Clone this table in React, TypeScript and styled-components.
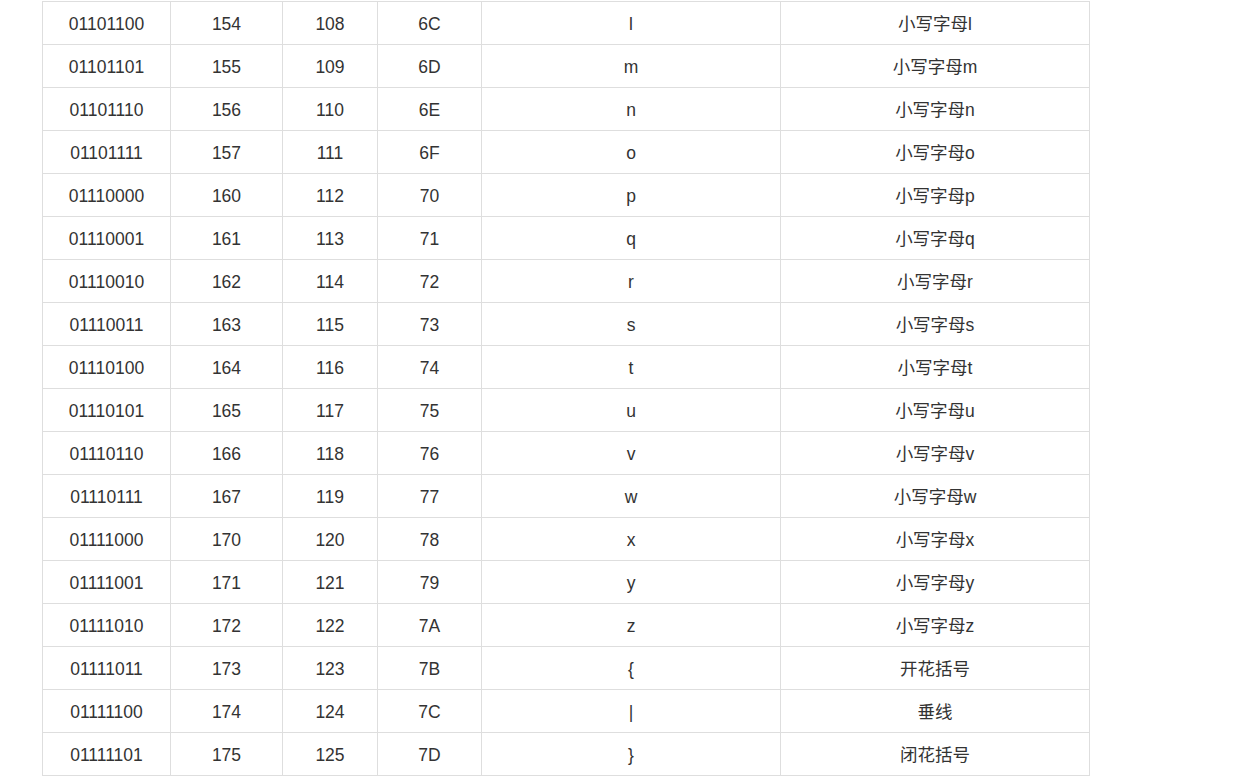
import React from "react";
import styled, { createGlobalStyle } from "styled-components";

const GlobalStyle = createGlobalStyle`
  html, body {
    margin: 0;
    padding: 0;
    background: #ffffff;
  }
  body {
    font-family: "Liberation Sans", Arial, "Noto Sans CJK SC", sans-serif;
    color: #333333;
  }
`;

const Page = styled.div`
  padding: 1px 0 0 42px;
  width: 1251px;
  height: 777px;
  box-sizing: border-box;
  overflow: hidden;
`;

const Table = styled.table`
  border-collapse: collapse;
  table-layout: fixed;
  width: 1047px;
`;

const Col = styled.col<{ $w: number }>`
  width: ${(p) => p.$w}px;
`;

const Row = styled.tr`
  height: 43px;
`;

const Cell = styled.td`
  border: 1px solid #dedede;
  padding: 1px 0 0 0;
  text-align: center;
  vertical-align: middle;
  font-size: 17.5px;
  line-height: 20px;
  color: #333333;
  font-family: "Liberation Sans", Arial, "Noto Sans CJK SC", sans-serif;
`;

const names: Record<number, string> = {
  123: "开花括号",
  124: "垂线",
  125: "闭花括号",
};

const rows = Array.from({ length: 18 }, (_, i) => {
  const code = 108 + i;
  const ch = String.fromCharCode(code);
  return {
    bin: code.toString(2).padStart(8, "0"),
    oct: code.toString(8),
    dec: String(code),
    hex: code.toString(16).toUpperCase(),
    ch,
    desc: names[code] ?? `小写字母${ch}`,
  };
});

const widths = [128, 112, 95, 104, 299, 309];

export default function App() {
  return (
    <>
      <GlobalStyle />
      <Page>
        <Table>
          <colgroup>
            {widths.map((w, i) => (
              <Col key={i} $w={w} />
            ))}
          </colgroup>
          <tbody>
            {rows.map((r) => (
              <Row key={r.dec}>
                <Cell>{r.bin}</Cell>
                <Cell>{r.oct}</Cell>
                <Cell>{r.dec}</Cell>
                <Cell>{r.hex}</Cell>
                <Cell>{r.ch}</Cell>
                <Cell>{r.desc}</Cell>
              </Row>
            ))}
          </tbody>
        </Table>
      </Page>
    </>
  );
}
